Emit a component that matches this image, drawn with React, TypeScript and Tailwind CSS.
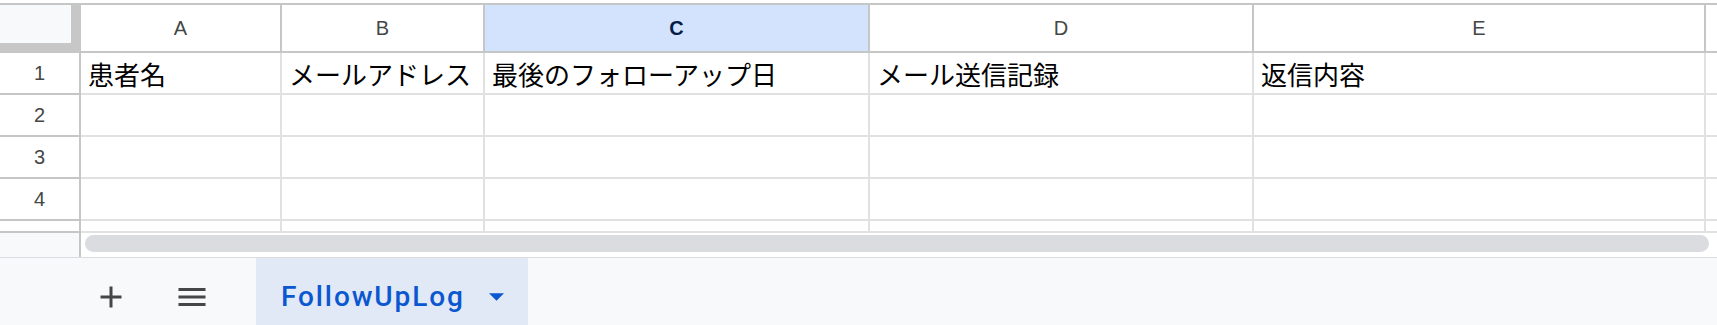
const columns = [
  { label: "A", width: "w-[201px]", text: "患者名" },
  { label: "B", width: "w-[203px]", text: "メールアドレス" },
  { label: "C", width: "w-[385px]", text: "最後のフォローアップ日", selected: true },
  { label: "D", width: "w-[384px]", text: "メール送信記録" },
  { label: "E", width: "w-[452px]", text: "返信内容" },
];

const rows = [1, 2, 3, 4];

function AddIcon() {
  return (
    <svg viewBox="0 0 24 24" className="w-[36px] h-[36px] fill-[#444746]">
      <path d="M19 13h-6v6h-2v-6H5v-2h6V5h2v6h6v2z" />
    </svg>
  );
}

function MenuIcon() {
  return (
    <svg viewBox="0 0 24 24" className="w-[36px] h-[36px] fill-[#444746]">
      <path d="M3 18h18v-2H3v2zm0-5h18v-2H3v2zm0-7v2h18V6H3z" />
    </svg>
  );
}

export default function App() {
  return (
    <div className="w-[1717px] h-[325px] overflow-hidden bg-white flex flex-col font-['Liberation_Sans',Arial,sans-serif]">
      <div className="h-[3px] shrink-0" />

      {/* column headers */}
      <div className="flex h-[50px] shrink-0 border-y-2 border-[#c4c7c5]">
        <div className="w-[81px] shrink-0 bg-[#c7c7c7]">
          <div className="w-[71px] h-[38px] bg-[#f8f9fa]" />
        </div>
        {columns.map((col) => (
          <div
            key={col.label}
            className={`${col.width} shrink-0 border-r-2 border-[#c4c7c5] flex items-center justify-center text-[20px] ${
              col.selected ? "bg-[#d3e3fd] text-[#041e49] font-bold" : "text-[#444746]"
            }`}
          >
            {col.label}
          </div>
        ))}
        <div className="flex-1" />
      </div>

      {/* data rows */}
      {rows.map((n) => (
        <div key={n} className="flex h-[42px] shrink-0">
          <div className="w-[81px] shrink-0 border-r-2 border-b-2 border-[#c4c7c5] flex items-center justify-center text-[20px] text-[#444746]">
            {n}
          </div>
          {columns.map((col) => (
            <div
              key={col.label}
              className={`${col.width} shrink-0 border-r-2 border-b-2 border-[#e1e1e1] flex items-center pl-[7px] whitespace-nowrap overflow-hidden text-[26px] text-black font-['Noto_Sans_CJK_JP',sans-serif]`}
            >
              {n === 1 ? col.text : ""}
            </div>
          ))}
          <div className="flex-1 border-b-2 border-[#e1e1e1]" />
        </div>
      ))}

      {/* partial row 5 */}
      <div className="flex h-[12px] shrink-0">
        <div className="w-[81px] shrink-0 border-r-2 border-b-2 border-[#c4c7c5]" />
        {columns.map((col) => (
          <div key={col.label} className={`${col.width} shrink-0 border-r-2 border-b-2 border-[#e1e1e1]`} />
        ))}
        <div className="flex-1 border-b-2 border-[#e1e1e1]" />
      </div>

      {/* horizontal scrollbar */}
      <div className="flex h-[24px] shrink-0">
        <div className="w-[81px] shrink-0 bg-[#f8f9fa] border-r-2 border-[#c4c7c5]" />
        <div className="flex-1 pl-[4px] pr-[8px] pt-[2px]">
          <div className="h-[17px] rounded-full bg-[#dadce0]" />
        </div>
      </div>

      {/* sheet tabs */}
      <div className="flex h-[78px] shrink-0 bg-[#f8f9fa] border-t border-[#dadce0] pl-[93px]">
        <div className="self-center">
          <AddIcon />
        </div>
        <div className="self-center ml-[45px]">
          <MenuIcon />
        </div>
        <div className="ml-[46px] flex items-center pl-[25px] pr-[24px] bg-[#e1e9f7]">
          <span className="text-[28px] font-medium text-[#0b57d0] font-['Roboto',sans-serif] tracking-[1.9px]">
            FollowUpLog
          </span>
          <svg viewBox="0 0 16 8" className="ml-[24px] w-[15px] h-[8px] fill-[#0b57d0]">
            <path d="M0 0h16L8 8z" />
          </svg>
        </div>
      </div>
    </div>
  );
}
